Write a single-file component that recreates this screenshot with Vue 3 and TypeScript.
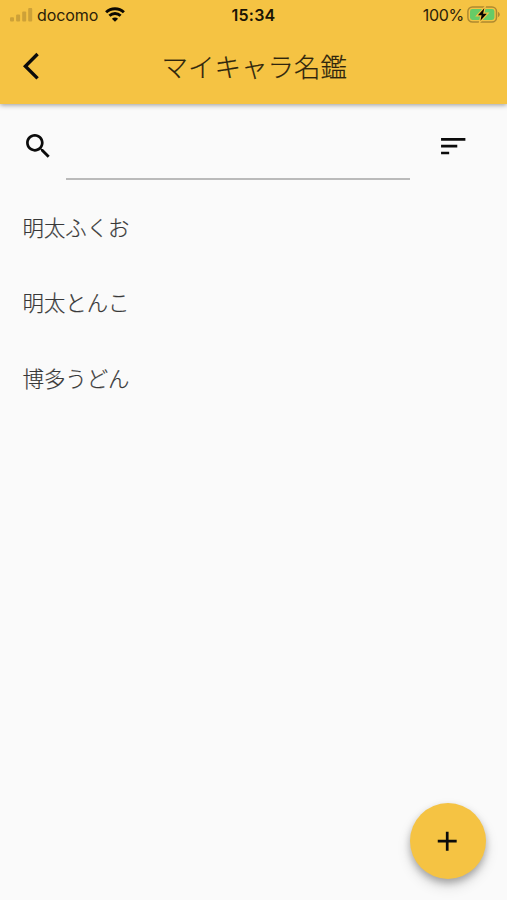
<script setup lang="ts">
import { ref } from 'vue'

interface Character {
  id: number
  name: string
}

const keyword = ref<string>('')
const characters: Character[] = [
  { id: 1, name: '明太ふくお' },
  { id: 2, name: '明太とんこ' },
  { id: 3, name: '博多うどん' },
]
</script>

<template>
  <div class="screen">
    <header class="header">
      <div class="status">
        <div class="carrier">
          <svg class="signal" width="23" height="14" viewBox="0 0 23 14">
            <rect x="0" y="9.3" width="4" height="4.2" rx="1" />
            <rect x="6.1" y="6.6" width="4" height="6.9" rx="1" />
            <rect x="12.2" y="3.6" width="4" height="9.9" rx="1" />
            <rect x="18.2" y="0" width="4" height="13.5" rx="1" />
          </svg>
          <span class="carrier-name">docomo</span>
          <svg class="wifi" width="20" height="15" viewBox="0 0 20 15">
            <path d="M1.100 5.200C6 .5 14 .5 18.900 5.200" />
            <path d="M4.400 8.700c3.200-3 8-3 11.200 0" />
            <path class="dot" d="M10 14.800 6.900 11.800c1.700-1.700 4.500-1.700 6.200 0z" />
          </svg>
        </div>
        <span class="time">15:34</span>
        <div class="power">
          <span class="percent">100%</span>
          <svg class="battery" width="33" height="17" viewBox="0 0 33 17">
            <rect class="case" x="0.9" y="1" width="28.6" height="15" rx="4.5" />
            <rect class="charge" x="3" y="3.1" width="24.4" height="10.8" rx="2.3" />
            <path class="tip" d="M31 6v5c1-.3 1.8-1.300 1.800-2.500S32 6.300 31 6z" />
            <path class="bolt" d="M17.300 2.200 10.900 9.200h3.700l-1.200 5.600 6.400-7.100h-3.700z" />
          </svg>
        </div>
      </div>
      <div class="toolbar">
        <button class="icon-button" aria-label="戻る">
          <svg class="icon" viewBox="0 0 24 24"><path d="M11.670 3.870 9.900 2.100 0 12l9.900 9.900 1.770-1.770L3.540 12z" /></svg>
        </button>
        <h1 class="title">マイキャラ名鑑</h1>
      </div>
    </header>

    <div class="search">
      <svg class="icon" viewBox="0 0 24 24">
        <path d="M15.500 14h-.79l-.28-.27C15.410 12.590 16 11.110 16 9.500 16 5.910 13.090 3 9.500 3S3 5.910 3 9.500 5.910 16 9.500 16c1.610 0 3.090-.59 4.230-1.570l.27.28v.79l5 4.990L20.490 19l-4.990-5zm-6 0C7.010 14 5 11.990 5 9.500S7.010 5 9.500 5 14 7.010 14 9.500 11.990 14 9.500 14z" />
      </svg>
      <input v-model="keyword" class="field" type="text" />
      <button class="icon-button" aria-label="並べ替え">
        <svg class="icon" viewBox="0 0 24 24"><path d="M3 18h6v-2H3v2zM3 6v2h18V6H3zm0 7h12v-2H3v2z" /></svg>
      </button>
    </div>

    <ul class="list">
      <li v-for="character in characters" :key="character.id" class="row">{{ character.name }}</li>
    </ul>

    <button class="fab" aria-label="追加">
      <svg class="icon" viewBox="0 0 24 24"><path d="M19 13h-6v6h-2v-6H5v-2h6V5h2v6h6v2z" /></svg>
    </button>
  </div>
</template>

<style>
body {
  margin: 0;
  background: #fafafa;
}
</style>

<style scoped>
.screen {
  position: relative;
  display: flex;
  flex-direction: column;
  height: 900px;
  overflow: hidden;
  background: #fafafa;
  font-family: "Noto Sans CJK JP", sans-serif;
  font-weight: 300;
}

.header {
  height: 104px;
  background: #f5c343;
  box-shadow: 0 1px 5px rgba(0, 0, 0, 0.4);
}

.status {
  display: grid;
  grid-template-columns: 1fr auto 1fr;
  align-items: center;
  height: 29px;
  padding: 0 7px 0 10px;
  font-family: Inter, sans-serif;
  font-size: 16px;
  font-weight: 400;
  line-height: 29px;
  color: #2b2108;
}

.carrier,
.power {
  display: flex;
  align-items: center;
}

.power {
  justify-content: flex-end;
  gap: 3px;
}

.signal {
  fill: #cda138;
}

.carrier-name,
.percent,
.time {
  padding-top: 1px;
  line-height: 28px;
}

.carrier-name {
  margin-left: 4px;
  letter-spacing: -0.1px;
}

.percent {
  letter-spacing: -0.3px;
}

.wifi {
  margin-left: 7px;
  fill: none;
  stroke: #0c0902;
  stroke-width: 2.9;
}

.wifi .dot {
  fill: #0c0902;
  stroke: none;
}

.time {
  margin: 0 3px 0 0;
  font-weight: 600;
  letter-spacing: 0.2px;
  color: #1a1405;
}

.case {
  fill: none;
  stroke: #ae8930;
  stroke-width: 1.5;
}

.charge {
  fill: #66cb67;
}

.tip {
  fill: #ae8930;
}

.bolt {
  fill: #080600;
  stroke: #f5c343;
  stroke-width: 2.4;
  paint-order: stroke;
}

.toolbar {
  display: grid;
  grid-template-columns: 33px 1fr 33px;
  align-items: center;
  height: 74px;
  padding: 0 21px 0 22.500px;
}

.title {
  margin: 0;
  padding-bottom: 1px;
  font-size: 26.500px;
  font-weight: 300;
  line-height: 40px;
  text-align: center;
  color: #2e250d;
  -webkit-text-stroke: 0.2px #2e250d;
}

.icon-button {
  display: block;
  padding: 0;
  border: 0;
  background: none;
}

.icon {
  display: block;
  width: 32.45px;
  height: 32.45px;
  fill: #0b0b0b;
}

.search {
  display: flex;
  align-items: flex-start;
  height: 58.500px;
  padding: 26px 37px 0 22px;
}

.field {
  box-sizing: border-box;
  width: 344px;
  height: 50px;
  margin: 0 27px 0 11.500px;
  padding: 0;
  border: 0;
  border-bottom: 2px solid #bababa;
  background: transparent;
  font: inherit;
  font-size: 21.600px;
  outline: none;
}

.list {
  margin: 0;
  padding: 0 22.500px;
  list-style: none;
}

.row {
  height: 75.500px;
  font-size: 21.400px;
  line-height: 75.500px;
  color: #383838;
  -webkit-text-stroke: 0.2px #383838;
}

.fab {
  position: absolute;
  right: 21.500px;
  bottom: 21px;
  display: flex;
  align-items: center;
  justify-content: center;
  width: 76px;
  height: 76px;
  padding: 0;
  border: 0;
  border-radius: 50%;
  background: #f5c343;
  box-shadow: 0 4px 7px rgba(0, 0, 0, 0.25), 0 7px 14px rgba(0, 0, 0, 0.14);
}
</style>
